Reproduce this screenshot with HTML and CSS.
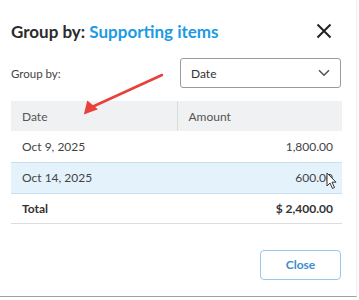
FILE: index.html
```html
<!DOCTYPE html>
<html lang="en">
<head>
    <meta charset="UTF-8">
    <meta name="viewport" content="width=device-width, initial-scale=1.0">
    <title>Group by: Supporting items</title>
    <link rel="stylesheet" href="styles.css">
</head>
<body>
    <div class="dialog">
        <div class="dialog-header">
            <h1 class="title">Group by: <span class="title-accent">Supporting items</span></h1>
            <button class="close-x" aria-label="Close">
                <svg width="16" height="16" viewBox="0 0 16 16"><path d="M1.5 1.5 L14.5 14.5 M14.5 1.5 L1.5 14.5" stroke="#222" stroke-width="2" fill="none"/></svg>
            </button>
        </div>
        <div class="group-row">
            <label class="group-label">Group by:</label>
            <div class="select">
                <span>Date</span>
                <svg width="12" height="8" viewBox="0 0 12 8"><path d="M1 1.2 L6 6.2 L11 1.2" stroke="#555" stroke-width="1.6" fill="none"/></svg>
            </div>
        </div>
        <table class="items">
            <thead>
                <tr>
                    <th class="col-date">Date</th>
                    <th>Amount</th>
                </tr>
            </thead>
            <tbody>
                <tr>
                    <td>Oct 9, 2025</td>
                    <td class="num">1,800.00</td>
                </tr>
                <tr class="hover">
                    <td>Oct 14, 2025</td>
                    <td class="num">600.00</td>
                </tr>
                <tr class="total">
                    <td>Total</td>
                    <td class="num">$ 2,400.00</td>
                </tr>
            </tbody>
        </table>
        <div class="dialog-footer">
            <button class="btn-close">Close</button>
        </div>
        <!-- annotation arrow drawn over the screenshot -->
        <svg class="arrow" width="90" height="50" viewBox="0 0 90 50">
            <path d="M84 3 L14 35" stroke="#e8403a" stroke-width="2.5" stroke-linecap="round" fill="none"/>
            <path d="M4 40 L12 28 L19 40 Z" fill="#e8403a" transform="rotate(-20 12 36)"/>
        </svg>
        <svg class="cursor" width="12" height="18" viewBox="0 0 12 18">
            <path d="M1 1 L1 14 L4 11 L6.5 16.5 L8.5 15.5 L6 10.2 L10 10.2 Z" fill="#fff" stroke="#333" stroke-width="1"/>
        </svg>
    </div>
</body>
</html>
```

FILE: styles.css
```css
body {
    margin: 0;
    padding: 0;
    background-color: #fff;
    font-family: Lato, "Open Sans", sans-serif;
    color: #333;
}
.dialog {
    position: relative;
    width: 357px;
    height: 297px;
    box-sizing: border-box;
    padding: 18px 15px 0 11px;
    border-bottom: 1px solid #a0a0a0;
    border-right: 1px solid #eee;
}
.dialog-header {
    display: flex;
    align-items: center;
    justify-content: space-between;
    height: 26px;
}
.title {
    margin: 0;
    font-size: 17px;
    font-weight: 700;
    color: #2b2b2b;
}
.title-accent {
    color: #1c9ae2;
}
.close-x {
    border: none;
    background: none;
    padding: 0;
    margin-right: 9px;
    display: flex;
}
.group-row {
    display: flex;
    align-items: center;
    justify-content: space-between;
    margin-top: 14px;
}
.group-label {
    font-size: 11.5px;
    color: #444;
}
.select {
    width: 161px;
    height: 30px;
    box-sizing: border-box;
    border: 1px solid #9a9a9a;
    border-radius: 3px;
    display: flex;
    align-items: center;
    justify-content: space-between;
    padding: 0 10px 0 10px;
    font-size: 12px;
    color: #333;
}
table.items {
    width: 331px;
    margin-top: 13px;
    border-collapse: collapse;
    font-size: 12px;
}
.items th, .items td {
    height: 31px;
    padding: 0 9px 0 11px;
    text-align: left;
    box-sizing: border-box;
}
.items th {
    background-color: #f0f1f2;
    font-weight: 400;
    color: #555;
    height: 30px;
}
.items th.col-date {
    width: 166px;
    border-right: 1px solid #dcdcdc;
}
.items td {
    color: #444;
}
.items td.num {
    text-align: right;
}
.items tr.hover td {
    background-color: #e4f2fc;
    border-top: 1px solid #c9def0;
    border-bottom: 1px solid #c9def0;
}
.items tr.total td {
    font-weight: 700;
    color: #333;
    height: 30px;
    border-bottom: 1px solid #ddd;
}
.dialog-footer {
    display: flex;
    justify-content: flex-end;
    margin-top: 26px;
}
.btn-close {
    width: 81px;
    height: 30px;
    border: 1.5px solid #98c9ec;
    border-radius: 4px;
    background: #fff;
    color: #3a8dd0;
    font-family: Lato, sans-serif;
    font-weight: 700;
    font-size: 12px;
}
.arrow {
    position: absolute;
    left: 78px;
    top: 72px;
}
.cursor {
    position: absolute;
    left: 326px;
    top: 172px;
}
```
